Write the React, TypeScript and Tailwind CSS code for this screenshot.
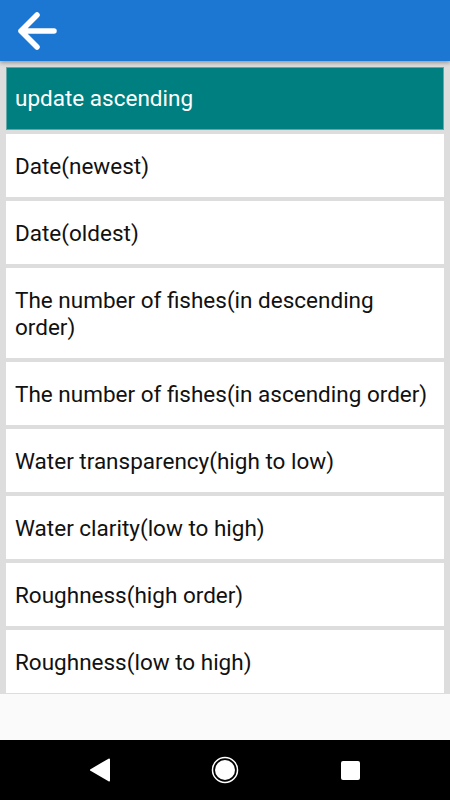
const options = [
  'update ascending',
  'Date(newest)',
  'Date(oldest)',
  'The number of fishes(in descending order)',
  'The number of fishes(in ascending order)',
  'Water transparency(high to low)',
  'Water clarity(low to high)',
  'Roughness(high order)',
  'Roughness(low to high)'
];

const BackArrow = () => (
  <svg width="44" height="44" viewBox="0 0 44 44" fill="none">
    <path
      d="M5 22H38M21 6L5 22L21 38"
      stroke="white"
      strokeWidth="5.5"
      strokeLinecap="round"
      strokeLinejoin="round"
    />
  </svg>
);

const NavBar = () => {
  return (
    <div className="flex h-[60px] items-center bg-black">
      <div className="flex w-[200px] justify-center">
        <svg width="22" height="26" viewBox="0 0 22 26">
          <path d="M20 2.5 L2 13 L20 23.5 Z" fill="white" stroke="white" strokeWidth="2" strokeLinejoin="round" />
        </svg>
      </div>
      <div className="flex w-[50px] justify-center">
        <svg width="28" height="28" viewBox="0 0 28 28">
          <circle cx="14" cy="14" r="12.5" fill="none" stroke="white" strokeWidth="1.5" />
          <circle cx="14" cy="14" r="10" fill="white" />
        </svg>
      </div>
      <div className="flex w-[200px] justify-center">
        <div className="size-[19px] rounded-[2px] bg-white" />
      </div>
    </div>
  );
};

export default function App() {
  return (
    <div className="flex h-[800px] w-[450px] flex-col bg-[#fafafa] font-['Roboto',sans-serif]">
      <header className="relative z-10 flex h-[61px] items-center bg-[#1c77d3] pl-[16px] shadow-[0_2px_4px_rgba(0,0,0,0.3)]">
        <BackArrow />
      </header>
      <div className="flex flex-col gap-[4px] bg-[#dddddd] px-[6px] pt-[6px] pb-[1px]">
        {options.map((label, i) => (
          <div
            key={label}
            className={
              i === 0
                ? 'border border-[#62a8a8] bg-[#007f80] px-[8px] py-[17px] text-[22.5px] leading-[27px] text-white'
                : 'bg-white px-[9px] pt-[19px] pb-[17px] text-[22.5px] leading-[27px] text-[#111]'
            }
          >
            {label}
          </div>
        ))}
      </div>
      <div className="flex-1" />
      <NavBar />
    </div>
  );
}
